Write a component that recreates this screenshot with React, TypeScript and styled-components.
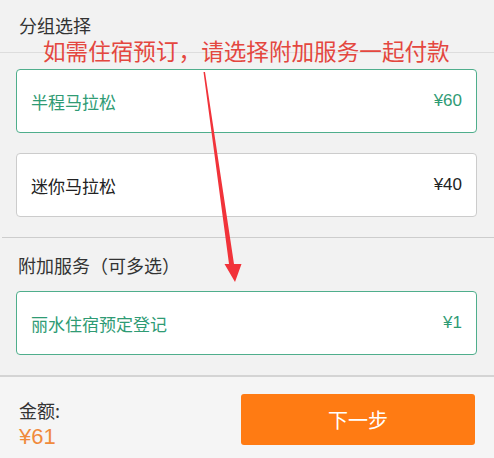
import React from "react";
import styled, { createGlobalStyle } from "styled-components";

const Global = createGlobalStyle`
  html, body { margin: 0; padding: 0; background: #f2f2f2; }
  body { font-family: "Noto Sans CJK SC", "Noto Sans", "Liberation Sans", sans-serif; }
  * { box-sizing: border-box; }
`;

const Page = styled.div`
  position: relative;
  width: 494px;
  height: 458px;
  overflow: hidden;
  background: #f2f2f2;
  display: flex;
  flex-direction: column;
`;

const Header = styled.div`
  height: 53px;
  padding: 16px 0 0 19px;
  border-bottom: 1px solid #dddddd;
  font-size: 18px;
  line-height: 18px;
  color: #333333;
`;

const Section = styled.div<{ $top?: number }>`
  display: flex;
  flex-direction: column;
  gap: 20px;
  padding: ${(p) => p.$top ?? 16}px 17px 20px 16px;
`;

const Divider = styled.div`
  height: 1px;
  background: #cdcdcd;
  margin-left: 2px;
`;

const SectionTitle = styled.div`
  padding: 16px 0 0 18px;
  font-size: 18px;
  line-height: 22px;
  color: #333333;
`;

const Card = styled.div<{ $active?: boolean }>`
  height: 64px;
  display: flex;
  align-items: center;
  justify-content: space-between;
  padding: 0 14px 0 14px;
  background: #ffffff;
  border: 1px solid ${(p) => (p.$active ? "#4fae8c" : "#cccccc")};
  border-radius: 4px;
  font-size: 17px;
  color: ${(p) => (p.$active ? "#2f9b74" : "#222222")};
`;

const Price = styled.span`
  font-family: "Liberation Sans", "Noto Sans", sans-serif;
  font-size: 17px;
`;

const Footer = styled.div`
  flex: 1;
  background: #f5f5f5;
  border-top: 2px solid #d4d4d4;
  display: flex;
  align-items: flex-start;
  justify-content: space-between;
  padding: 17px 19px 0 19px;
`;

const Amount = styled.div`
  display: flex;
  flex-direction: column;
  padding-top: 5px;
`;

const AmountLabel = styled.div`
  font-size: 18px;
  line-height: 22px;
  color: #333333;
`;

const AmountValue = styled.div`
  font-family: "Liberation Sans", "Noto Sans", sans-serif;
  font-size: 22px;
  line-height: 28px;
  margin-top: 2px;
  color: #f08a3c;
`;

const NextButton = styled.button`
  width: 234px;
  height: 51px;
  border: none;
  border-radius: 3px;
  background: #ff7b13;
  color: #ffffff;
  font-family: inherit;
  font-size: 20px;
  display: flex;
  align-items: center;
  justify-content: center;
  padding: 0;
`;

const Note = styled.div`
  position: absolute;
  left: 43px;
  top: 39px;
  font-size: 22.6px;
  line-height: 24px;
  color: #e4473f;
  white-space: nowrap;
  pointer-events: none;
`;

const Overlay = styled.svg`
  position: absolute;
  left: 0;
  top: 0;
  pointer-events: none;
`;

export default function App() {
  return (
    <>
      <Global />
      <Page>
        <Header>分组选择</Header>
        <Section>
          <Card $active>
            <span>半程马拉松</span>
            <Price>¥60</Price>
          </Card>
          <Card>
            <span>迷你马拉松</span>
            <Price>¥40</Price>
          </Card>
        </Section>
        <Divider />
        <SectionTitle>附加服务（可多选）</SectionTitle>
        <Section $top={15}>
          <Card $active>
            <span>丽水住宿预定登记</span>
            <Price>¥1</Price>
          </Card>
        </Section>
        <Footer>
          <Amount>
            <AmountLabel>金额:</AmountLabel>
            <AmountValue>¥61</AmountValue>
          </Amount>
          <NextButton>下一步</NextButton>
        </Footer>
        <Note>如需住宿预订，请选择附加服务一起付款</Note>
        <Overlay width="494" height="458" viewBox="0 0 494 458">
          <polygon
            points="203.5,72 205,72 234,264 241.5,264 235,282 224.5,264 229,264"
            fill="#f1333a"
          />
        </Overlay>
      </Page>
    </>
  );
}
